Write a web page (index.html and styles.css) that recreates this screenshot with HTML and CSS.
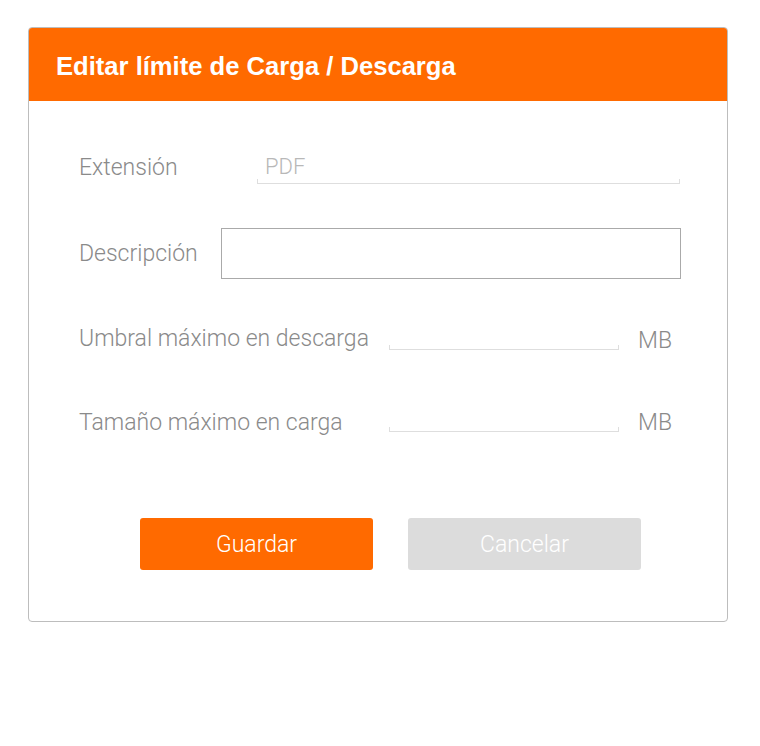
FILE: index.html
```html
<!DOCTYPE html>
<html lang="es">
<head>
<meta charset="utf-8">
<title>Editar límite de Carga / Descarga</title>
<link rel="stylesheet" href="styles.css">
</head>
<body>
<div class="card">
  <div class="card-header">Editar límite de Carga / Descarga</div>
  <div class="card-body">
    <div class="row row-ext">
      <span class="label label-ext">Extensión</span>
      <div class="line-input ext-input">PDF</div>
    </div>
    <div class="row row-desc">
      <span class="label label-desc">Descripción</span>
      <div class="box-input"></div>
    </div>
    <div class="row row-umbral">
      <span class="label label-mb">Umbral máximo en descarga</span>
      <div class="line-input mb-input"></div>
      <span class="unit">MB</span>
    </div>
    <div class="row row-tam">
      <span class="label label-mb label-tam">Tamaño máximo en carga</span>
      <div class="line-input mb-input"></div>
      <span class="unit">MB</span>
    </div>
    <div class="actions">
      <button class="btn btn-primary">Guardar</button>
      <button class="btn btn-secondary">Cancelar</button>
    </div>
  </div>
</div>
</body>
</html>
```

FILE: styles.css
```css
html, body {
  margin: 0;
  padding: 0;
  background: #ffffff;
}

body {
  padding: 27px 0 0 28px;
  font-family: "Roboto", "Liberation Sans", sans-serif;
}

.card {
  width: 698px;
  border: 1px solid #bdbdbd;
  border-radius: 4px;
  overflow: hidden;
  background: #fff;
}

.card-header {
  height: 73px;
  background: #ff6a00;
  color: #fff;
  font-family: "Liberation Sans", Arial, sans-serif;
  font-weight: bold;
  font-size: 25.6px;
  line-height: 76px;
  padding-left: 27px;
}

.card-body {
  padding: 49px 0 51px 50px;
}

.row {
  display: flex;
  align-items: center;
}

.label {
  flex: none;
  font-size: 23px;
  font-weight: 300;
  color: #8a8a8a;
  white-space: nowrap;
}

.label-ext {
  width: 178px;
}

.label-desc {
  width: 142px;
}

.label-mb {
  width: 310px;
}

.label-tam {
  padding-top: 5px;
}

.line-input {
  box-sizing: border-box;
  border-bottom: 1px solid #dedede;
  background:
    linear-gradient(#dedede, #dedede) left bottom / 1px 4px no-repeat,
    linear-gradient(#dedede, #dedede) right bottom / 1px 4px no-repeat;
}

.row-ext {
  height: 34px;
}

.ext-input {
  width: 423px;
  height: 34px;
  padding-left: 8px;
  font-size: 22px;
  font-weight: 300;
  color: #b8b8b8;
  line-height: 34px;
}

.row-desc {
  margin-top: 44px;
  height: 51px;
}

.box-input {
  box-sizing: border-box;
  width: 460px;
  height: 51px;
  border: 1px solid #aaaaaa;
}

.row-umbral {
  margin-top: 47px;
  height: 24px;
}

.row-tam {
  margin-top: 58px;
  height: 24px;
}

.mb-input {
  width: 230px;
  height: 24px;
}

.unit {
  margin-left: 19px;
  font-size: 23px;
  font-weight: 300;
  color: #8a8a8a;
  padding-top: 4px;
}

.actions {
  display: flex;
  gap: 35px;
  margin-top: 86px;
  padding-left: 61px;
}

.btn {
  width: 233px;
  height: 52px;
  border: none;
  border-radius: 3px;
  font-family: "Roboto", "Liberation Sans", sans-serif;
  font-size: 23px;
  font-weight: 300;
  color: #fff;
  padding: 0;
}

.btn-primary {
  background: #ff6a00;
}

.btn-secondary {
  background: #dcdcdc;
}
```
